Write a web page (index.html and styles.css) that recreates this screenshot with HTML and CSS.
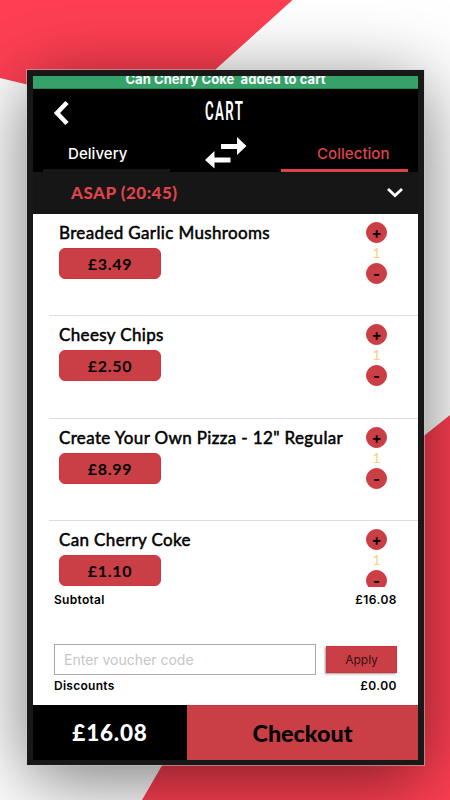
FILE: index.html
```html
<!DOCTYPE html>
<html lang="en">
<head>
<meta charset="utf-8">
<title>Cart</title>
<link rel="stylesheet" href="styles.css">
</head>
<body>
<svg class="backdrop" viewBox="0 0 450 800" aria-hidden="true">
  <path fill="#ff3f52" d="M0 0H292.500L216 69V130L0 78Z"/>
  <path fill="#ff3f52" d="M450 415L200 615V700L142 800H450Z"/>
</svg>
<main class="phone">
  <div class="toast"><span>Can Cherry Coke&nbsp; added to cart</span></div>
  <header class="header">
    <div class="title-bar">
      <svg class="back" viewBox="0 0 18 26"><path d="M15 2.500L5 13L15 23.500" fill="none" stroke="#fff" stroke-width="4.600"/></svg>
      <h1>CART</h1>
    </div>
    <nav class="tabs">
      <div class="tab delivery"><span>Delivery</span></div>
      <svg class="swap" viewBox="0 0 42 32"><path fill="#fff" d="M16 7H32V0L41.500 9L32 18V12H16ZM25.500 25.500H9.500V31.500L0 23L9.500 14V20.500H25.500Z"/></svg>
      <div class="tab collection"><span>Collection</span></div>
    </nav>
  </header>
  <div class="time"><span>ASAP (20:45)</span>
    <svg viewBox="0 0 18 12"><path d="M2 2L9 8.500L16 2" fill="none" stroke="#fff" stroke-width="2.800"/></svg>
  </div>
  <section class="items">
    <article class="item">
      <div class="info"><h2>Breaded Garlic Mushrooms</h2><div class="price">£3.49</div></div>
      <div class="qty"><button>+</button><span>1</span><button>-</button></div>
    </article>
    <article class="item">
      <div class="info"><h2>Cheesy Chips</h2><div class="price">£2.50</div></div>
      <div class="qty"><button>+</button><span>1</span><button>-</button></div>
    </article>
    <article class="item">
      <div class="info"><h2>Create Your Own Pizza - 12" Regular</h2><div class="price">£8.99</div></div>
      <div class="qty"><button>+</button><span>1</span><button>-</button></div>
    </article>
    <article class="item">
      <div class="info"><h2>Can Cherry Coke</h2><div class="price">£1.10</div></div>
      <div class="qty"><button>+</button><span>1</span><button>-</button></div>
    </article>
  </section>
  <section class="summary">
    <div class="line"><span>Subtotal</span><span>£16.08</span></div>
    <div class="voucher"><div class="field">Enter voucher code</div><button class="apply">Apply</button></div>
    <div class="line"><span>Discounts</span><span>£0.00</span></div>
  </section>
  <footer class="footer"><div class="total">£16.08</div><div class="checkout">Checkout</div></footer>
</main>
</body>
</html>
```
FILE: styles.css
```css
* { box-sizing: border-box; }
body {
  margin: 0;
  width: 450px;
  height: 800px;
  padding: 70px 0 0 27px;
  overflow: hidden;
  background: #fff;
  font-family: Inter, sans-serif;
  color: #000;
}
h1, h2 { margin: 0; }
button { border: 0; padding: 0; font-family: inherit; color: #000; }
.backdrop { position: absolute; left: 0; top: 0; width: 450px; height: 800px; }
.phone {
  position: relative;
  width: 397px;
  height: 695px;
  border: solid #181818;
  border-width: 6px 6px 5px;
  display: flex;
  flex-direction: column;
  background: #fff;
  box-shadow: 0 0 0 1px rgba(205, 205, 205, .5), 0 14px 70px 0 rgba(0, 0, 0, .54);
}
.toast {
  height: 13px;
  flex: none;
  overflow: hidden;
  background: #35a269;
  border-bottom: 1px solid #258651;
  color: #fff;
  font-size: 13px;
  font-weight: 700;
  line-height: 16px;
  text-align: center;
}
.toast span { display: block; margin-top: -5px; letter-spacing: .05px; }
.header { flex: none; height: 83px; background: #000; color: #fff; }
.title-bar { height: 44px; display: flex; padding-left: 19px; align-items: center; }
.back { width: 18px; height: 26px; margin-top: 4px; }
h1 {
  width: 40px;
  margin: 1px 0 0 135px;
  font: 600 25px/30px Roboto, sans-serif;
  letter-spacing: 2.700px;
  transform: scaleX(.53);
  transform-origin: 0 50%;
  white-space: nowrap;
}
.tabs { height: 39px; display: flex; justify-content: space-between; padding: 0 10px; }
.tab { width: 127px; border-bottom: 3px solid #161616; font-size: 15px; font-weight: 500; line-height: 42px; letter-spacing: .05px; }
.delivery { padding-left: 25px; }
.collection { padding-left: 36px; color: #df444b; border-color: #dd4249; }
.swap { width: 42px; height: 32px; margin-top: 4px; }
.time {
  height: 42px;
  flex: none;
  display: flex;
  align-items: center;
  justify-content: space-between;
  padding: 0 14px 0 38px;
  background: #161616;
  color: #df444b;
  font: 900 17px/42px Lato, sans-serif;
  letter-spacing: .5px;
}
.time svg { width: 18px; height: 12px; }
.items { height: 373px; flex: none; overflow: hidden; padding-left: 16px; }
.item {
  height: 102.400px;
  display: flex;
  justify-content: space-between;
  border-bottom: 1px solid #dedede;
  padding: 8px 31px 0 10px;
}
h2 {
  font: 400 17px/21px Lato, sans-serif;
  letter-spacing: .36px;
  -webkit-text-stroke: .5px #000;
  white-space: nowrap;
}
.price {
  width: 102px;
  height: 31px;
  margin-top: 5px;
  border-radius: 6px;
  border: 1px solid #d0343b;
  background: #ca3f45;
  text-align: center;
  font: 700 16px/29px Lato, sans-serif;
  letter-spacing: .7px;
}
.qty { display: flex; flex-direction: column; align-items: center; }
.qty button {
  width: 21px;
  height: 21px;
  border-radius: 50%;
  border: 1px solid #d0343b;
  background: #ca3f45;
  font-weight: 700;
  font-size: 15px;
  line-height: 19px;
}
.qty span { height: 20px; font: 400 14px/19px Lato, sans-serif; color: #fbd07a; }
.summary { flex: none; height: 118px; padding: 5px 21px 0; font-size: 12px; font-weight: 600; }
.line { height: 16px; line-height: 16px; display: flex; justify-content: space-between; letter-spacing: .28px; }
.line span:last-child { letter-spacing: .45px; }
.voucher { height: 70px; padding-top: 32px; display: flex; justify-content: space-between; align-items: center; }
.field {
  width: 262px;
  height: 31px;
  border: 1px solid #aaa;
  padding-left: 9px;
  font-weight: 400;
  font-size: 14px;
  line-height: 29px;
  color: #c6c6ca;
}
.apply {
  width: 71px;
  height: 27px;
  border: 1px solid #d0343b;
  background: #ca3f45;
  box-shadow: -1px 1px 2px rgba(0, 0, 0, .4);
  font-size: 12px;
  color: #351114;
}
.footer { height: 55px; display: flex; flex: none; text-align: center; }
.total { width: 154px; background: #000; color: #fff; font: 900 22.500px/56px Lato, sans-serif; letter-spacing: .8px; }
.checkout { flex: 1; background: #ca3f45; border-top: 1px solid #d0343b; font: 900 23.300px/54px Lato, sans-serif; }
```
